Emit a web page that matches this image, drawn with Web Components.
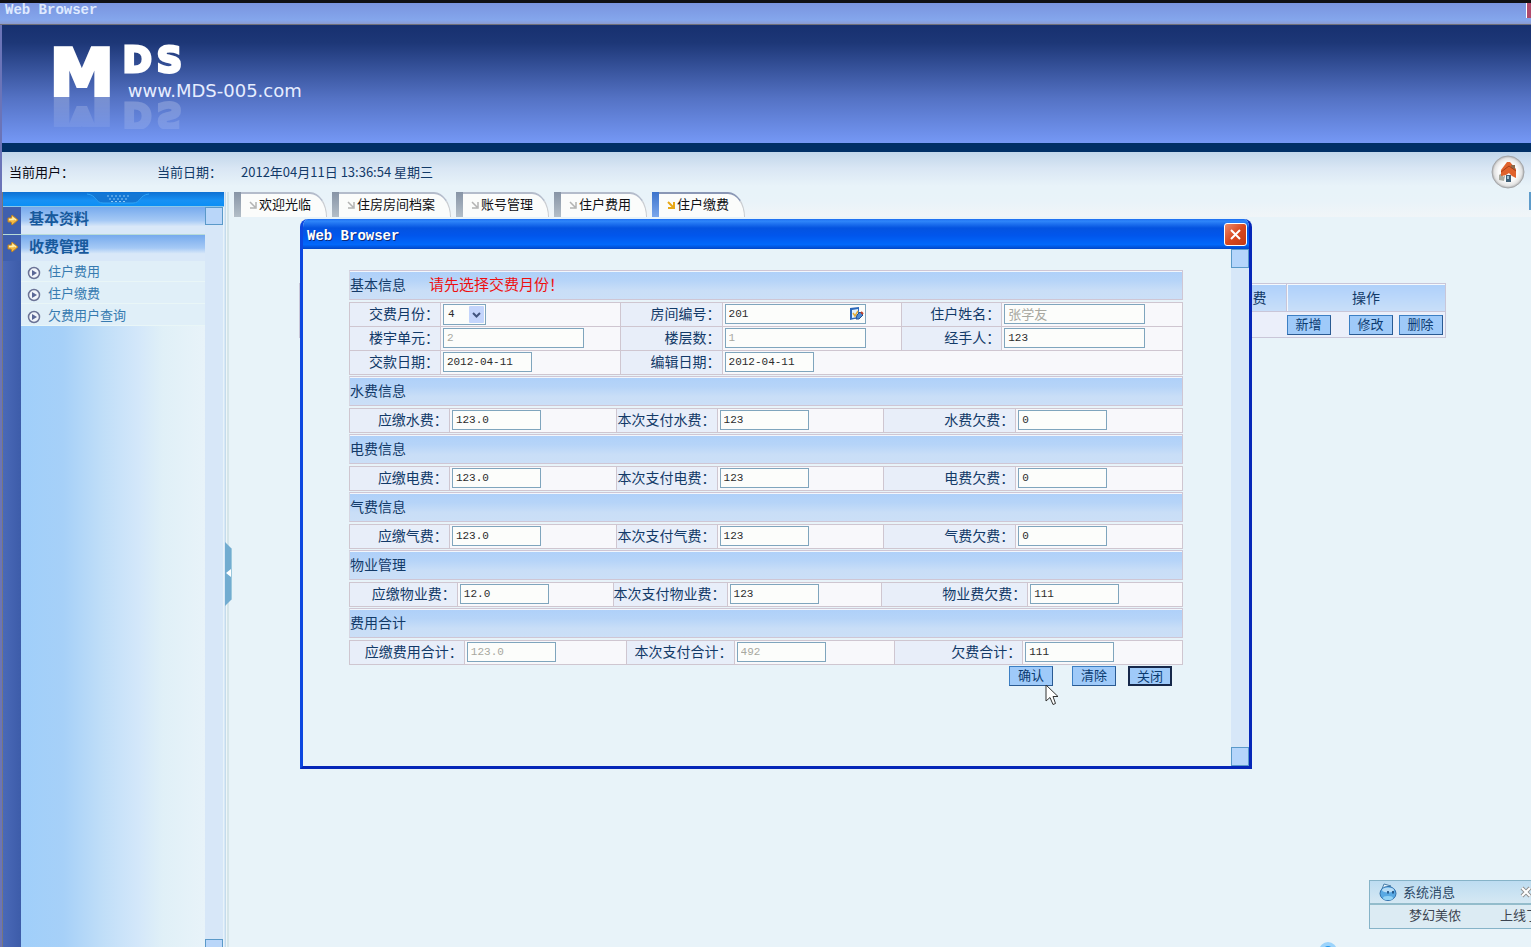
<!DOCTYPE html>
<html lang="zh-CN">
<head>
<meta charset="utf-8">
<title>MDS 物业管理</title>
<style>
  html, body { margin: 0; height: 100%; }
  body {
    font: 13px/20px "Noto Sans CJK SC", sans-serif;
    color: #123a68;
    background: #e8f3f9;
    overflow: hidden;
  }
</style>
</head>
<body>
<portal-shell window-title="Web Browser">
  <brand-banner slot="banner"></brand-banner>
  <info-bar slot="info" date="2012年04月11日 13:36:54 星期三"></info-bar>
  <side-menu slot="side"></side-menu>
  <tab-item slot="tabs">欢迎光临</tab-item>
  <tab-item slot="tabs">住房房间档案</tab-item>
  <tab-item slot="tabs">账号管理</tab-item>
  <tab-item slot="tabs">住户费用</tab-item>
  <tab-item slot="tabs" active>住户缴费</tab-item>
  <record-table></record-table>
</portal-shell>

<modal-window window-title="Web Browser">
  <fee-section heading="基本信息" note="请先选择交费月份！" columns="90fr 179fr 101fr 179fr 99fr 180fr">
    <fee-field label="交费月份" value="4" kind="select"></fee-field>
    <fee-field label="房间编号" value="201" kind="lookup" size="wide"></fee-field>
    <fee-field label="住户姓名" value="张学友" size="wide" off></fee-field>
    <fee-field label="楼宇单元" value="2" size="wide" off></fee-field>
    <fee-field label="楼层数" value="1" size="wide" off></fee-field>
    <fee-field label="经手人" value="123" size="wide"></fee-field>
    <fee-field label="交款日期" value="2012-04-11"></fee-field>
    <fee-field label="编辑日期" value="2012-04-11" fill></fee-field>
  </fee-section>
  <fee-section heading="水费信息" columns="99fr 166fr 100fr 166fr 131fr 166fr">
    <fee-field label="应缴水费" value="123.0"></fee-field>
    <fee-field label="本次支付水费" value="123"></fee-field>
    <fee-field label="水费欠费" value="0"></fee-field>
  </fee-section>
  <fee-section heading="电费信息" columns="99fr 166fr 100fr 166fr 131fr 166fr">
    <fee-field label="应缴电费" value="123.0"></fee-field>
    <fee-field label="本次支付电费" value="123"></fee-field>
    <fee-field label="电费欠费" value="0"></fee-field>
  </fee-section>
  <fee-section heading="气费信息" columns="99fr 166fr 100fr 166fr 131fr 166fr">
    <fee-field label="应缴气费" value="123.0"></fee-field>
    <fee-field label="本次支付气费" value="123"></fee-field>
    <fee-field label="气费欠费" value="0"></fee-field>
  </fee-section>
  <fee-section heading="物业管理" columns="107fr 155fr 113fr 154fr 145fr 154fr">
    <fee-field label="应缴物业费" value="12.0"></fee-field>
    <fee-field label="本次支付物业费" value="123"></fee-field>
    <fee-field label="物业费欠费" value="111"></fee-field>
  </fee-section>
  <fee-section heading="费用合计" columns="114fr 161fr 107fr 160fr 127fr 159fr">
    <fee-field label="应缴费用合计" value="123.0" off></fee-field>
    <fee-field label="本次支付合计" value="492" off></fee-field>
    <fee-field label="欠费合计" value="111"></fee-field>
  </fee-section>
  <push-button slot="actions">确认</push-button>
  <push-button slot="actions" class="gap">清除</push-button>
  <push-button slot="actions" class="default" strong>关闭</push-button>
</modal-window>
<message-toast></message-toast>
<mouse-pointer></mouse-pointer>

<script>
const define = (name, render) => customElements.define(name, class extends HTMLElement {
  connectedCallback() {
    if (this.shadowRoot) return;
    const t = document.createElement('template');
    t.innerHTML = render(this);
    this.attachShadow({ mode: 'open' }).append(t.content.cloneNode(true));
  }
});
const attr = (el, n) => el.getAttribute(n) || '';

define('portal-shell', el => `
<style>
  :host { display: flex; flex-direction: column; height: 100vh; box-sizing: border-box; border-top: 3px solid #101014; overflow: hidden; background: #e8f3f9; }
  .title { height: 21px; line-height: 14px; padding-left: 5px; font-family: "Liberation Mono", monospace; font-weight: bold; font-size: 14px; color: #dfeaff; background: linear-gradient(#7a94df, #84a6ec 80%, #8b9bd0); border-bottom: 1px solid #6e6e78; display: flex; justify-content: space-between; flex: none; }
  .title i { width: 4px; height: 15px; background: #b04a6c; border-left: 1px solid #fff; }
  .frame { flex: 1; min-height: 0; display: flex; flex-direction: column; border-left: 2px solid #6b74b8; }
  .body { flex: 1; min-height: 0; display: flex; border-left: 1px solid #77777c; }
  .split { width: 9px; flex: none; display: flex; align-items: center; box-sizing: border-box; padding-top: 9px; background: linear-gradient(90deg, #d7e7f8 1px, #c4dceb 1px 2px, #eef5f8 2px 3px, #d5e5e9 3px 5px, #e8f3f9 5px); }
  .split svg { margin-left: 1px; }
  main { flex: 1; min-width: 0; }
  nav { display: flex; gap: 5px; height: 25px; padding-left: 1px; background: linear-gradient(#e8f3f9, #e9f3f9 40%, #f1f5f8); }
  .edge { width: 2px; height: 18px; margin-left: auto; background: #5f9ccb; }
  .content { padding: 66px 85px 0 66px; }
</style>
<div class="title"><span>${attr(el, 'window-title')}</span><i></i></div>
<div class="frame">
  <slot name="banner"></slot>
  <slot name="info"></slot>
  <div class="body">
    <slot name="side"></slot>
    <div class="split"><svg width="8" height="64" viewBox="0 0 8 64"><path d="M0 0L7 7V57L0 64Z" fill="#72acd0"/><path d="M6.500 7V57" stroke="#9bc8dd"/><path d="M1 31L6 27V35Z" fill="#fff"/></svg></div>
    <main>
      <nav><slot name="tabs"></slot><span class="edge"></span></nav>
      <div class="content"><slot></slot></div>
    </main>
  </div>
</div>`);

define('brand-banner', () => `
<style>
  :host { display: flex; align-items: flex-start; gap: 9px; height: 118px; flex: none; padding: 0 0 0 48px; border-bottom: 9px solid #002f66; background: linear-gradient(#17306f, #1d3777 15%, #5472c4 62%, #7598f5); color: #fff; overflow: hidden; }
  .m, .ds { font-family: "DejaVu Sans", sans-serif; font-weight: bold; }
  .m { margin-top: 23px; height: 49px; font-size: 64px; line-height: 51px; -webkit-text-stroke: 4px #fff; -webkit-box-reflect: below 0 linear-gradient(transparent 38%, rgba(255,255,255,.08) 39%, rgba(255,255,255,.22)); }
  .ds { margin-top: 21px; height: 28px; font-size: 35px; line-height: 28px; -webkit-text-stroke: 3px #fff; display: flex; gap: 5px; width: max-content; -webkit-box-reflect: below 27px linear-gradient(rgba(255,255,255,.12), rgba(255,255,255,.22)); }
  .url { font: 18px/18px "DejaVu Sans", sans-serif; margin: 8px 0 0 5px; color: #e6edff; }
</style>
<div class="m">M</div>
<div><div class="ds"><span>D</span><span>S</span></div><div class="url">www.MDS-005.com</div></div>`);

define('info-bar', el => `
<style>
  :host { display: flex; align-items: center; height: 40px; flex: none; padding: 0 6px 0 7px; background: linear-gradient(#c1d6ea, #d9e6f4 40%, #e8f3f9 85%); }
  .user { width: 148px; color: #0a0a14; }
  .date { width: 84px; }
  a { margin-left: auto; height: 36px; }
</style>
<span class="user">当前用户：</span><span class="date">当前日期：</span><time>${attr(el, 'date')}</time>
<a href="#" aria-label="首页"><svg width="34" height="36" viewBox="0 0 34 36">
  <defs><radialGradient id="g"><stop offset=".6" stop-color="#fafafa"/><stop offset=".85" stop-color="#e4e4e4"/><stop offset="1" stop-color="#b0b0b0"/></radialGradient></defs>
  <circle cx="17" cy="18" r="16" fill="url(#g)" stroke="#a5a7aa"/>
  <path d="M8 21V26L13 27L14 22V17Z" fill="#a9aaa0"/><path d="M12 19L17 14L24 18V23L17 19L12 23Z" fill="#f3e9df"/>
  <path d="M10 16L16 8H19L25 15V24L21 22L18 19L15 21L10 22Z" fill="#e0622c"/><path d="M20 11H24V16L20 14Z" fill="#8d6a4c"/><path d="M10 18L18 12L25 17" stroke="#a83d17" fill="none"/>
  <rect x="15" y="21" width="5" height="7" fill="#3e5f77"/><rect x="16" y="22" width="2" height="3" fill="#a4c3d4"/>
</svg></a>`);

define('side-menu', () => {
  const arrow = `<svg width="12" height="12" viewBox="0 0 12 12"><path d="M1 4H4L5 1L11 6L5 11L4 8H1Z" fill="#f3b840" stroke="#b9812a"/><path d="M2 5.500H6V4L9 6" fill="none" stroke="#fff2b0" stroke-width="1.500"/></svg>`;
  const play = `<svg width="14" height="14" viewBox="0 0 14 14"><circle cx="7" cy="7" r="5.500" fill="#f2f5fb" stroke="#6b7396" stroke-width="1.500"/><path d="M5 4L10 7L5 10Z" fill="#5a6796"/></svg>`;
  return `
<style>
  :host { display: flex; flex-direction: column; width: 221px; flex: none; }
  .grip { height: 14px; flex: none; background: linear-gradient(#0d70d2, #1791f4 60%, #0c8ff5); border-bottom: 1px solid #8cc7e8; }
  .grip svg { display: block; margin-left: 84px; }
  .row { flex: 1; min-height: 0; display: flex; }
  .panel { flex: 1; background: linear-gradient(90deg, #4a69b8, #3d5ca9 18px, #a0cffa 18px, #a6d0f8 60px, #c0def8 100px, #d3e7fa 135px, #e0f0f7 160px, #e8f3f9); }
  h2 { margin: 0; height: 27px; display: flex; align-items: center; gap: 10px; padding-left: 4px; font-size: 15px; line-height: 22px; color: #17599c; background: linear-gradient(90deg, #3f5fad 18px, transparent 18px), linear-gradient(#76aaed, #a5c9f5 50%, #d9e8f8 72%); }
  h2 span { margin-bottom: 5px; }
  h2 svg { width: 12px; flex: none; margin-bottom: 2px; }
  .second { height: 26px; border-top: 1px solid #b8dcd8; }
  ul { list-style: none; margin: 0 0 0 18px; padding: 0; background: #e0eff8; }
  li { height: 21px; box-sizing: border-box; border-bottom: 1px solid #e9f6f7; display: flex; align-items: center; gap: 7px; padding-left: 6px; margin-bottom: 1px; }
  li svg { flex: none; margin-top: 3px; }
  li a { margin-bottom: 1px; }
  a { color: #377bb0; text-decoration: none; }
  .bar { width: 18px; flex: none; margin-right: 1px; background: #d7e7f8; display: flex; flex-direction: column; justify-content: space-between; }
  .bar i { height: 16px; border: 1px solid #5a99c9; background: #b9d6f9; }
  .bar i:last-child { height: 7px; border-bottom: 0; }
</style>
<div class="grip"><svg width="64" height="14" viewBox="0 0 64 14"><path d="M0 2C10 3 8 11 16 11H46C54 11 52 3 62 2" fill="#1477d4" stroke="#2fa3f5"/><path d="M20 4H44M22 7H42M24 9.500H40" stroke="#8fcaf7" stroke-dasharray="2 2"/></svg></div>
<div class="row">
  <nav class="panel">
    <h2>${arrow}<span>基本资料</span></h2>
    <h2 class="second">${arrow}<span>收费管理</span></h2>
    <ul>
      <li>${play}<a href="#">住户费用</a></li>
      <li>${play}<a href="#">住户缴费</a></li>
      <li>${play}<a href="#">欠费用户查询</a></li>
    </ul>
  </nav>
  <div class="bar"><i></i><i></i></div>
</div>`;
});

define('tab-item', el => {
  const on = el.hasAttribute('active');
  return `
<style>
  :host { display: flex; flex: none; height: 25px; }
  .lead { width: 7px; background: linear-gradient(${on ? '#3c74cc, #7aa6ec' : '#8794a6, #b3bec8'}); }
  a { display: flex; align-items: flex-start; gap: 2px; padding: 0 15px 0 8px; height: 23px; line-height: 20px; color: #101014; text-decoration: none; background: #fbfcfb; border-top: 2px solid ${on ? '#8a97b5' : '#b4bccb'}; border-right: 1px solid #c9ccd0; border-top-right-radius: 17px 25px; }
  svg { margin-top: 7px; flex: none; }
</style>
<i class="lead"></i><a href="#"><svg width="8" height="8" viewBox="0 0 8 8"><path d="M1 1L6 6M7 1V7H1" fill="none" stroke="${on ? '#e8a818' : '#b3b3b3'}" stroke-width="${on ? 2 : 1.5}"/></svg><slot></slot></a>`;
});

define('push-button', el => `
<style>
  :host { display: inline-block; }
  :host(.gap) { margin-left: 19px; }
  :host(.default) { margin-left: 12px; }
  button { display: block; box-sizing: border-box; width: 44px; height: 20px; padding: 0 0 2px; font: 13px/16px "Noto Sans CJK SC", sans-serif; color: #0b3a70; background: #9fcaf9; border: ${el.hasAttribute('strong') ? '2px solid #16284a' : '1px solid #3c7fc4'}; ${el.hasAttribute('strong') ? '' : 'border-right-color:#2a5a92;border-bottom-color:#2a5a92;'} }
</style><button type="button"><slot></slot></button>`);

define('record-table', () => `
<style>
  :host { display: block; }
  table { width: 100%; border-collapse: collapse; table-layout: fixed; border: 1px solid #c9c6d8; }
  th { height: 25px; padding: 0 0 2px; font-weight: normal; font-size: 14px; text-align: center; border: 1px solid #c9c6d8; background: linear-gradient(#aed0fa, #c9dff9); box-shadow: inset 1px 1px #f4f8fd; }
  td { height: 25px; padding: 0; background: #ebeffa; }
  .fee { width: 53px; } .ops { width: 158px; }
  .acts { display: flex; }
  .acts push-button:nth-child(2) { margin-left: 18px; }
  .acts push-button:nth-child(3) { margin-left: 6px; }
</style>
<table>
  <thead><tr><th></th><th class="fee">费</th><th class="ops">操作</th></tr></thead>
  <tbody><tr><td></td><td></td><td><div class="acts"><push-button>新增</push-button><push-button>修改</push-button><push-button>删除</push-button></div></td></tr></tbody>
</table>`);

define('modal-window', el => `
<style>
  :host { position: absolute; left: 300px; right: 279px; top: 219px; height: 550px; box-sizing: border-box; display: flex; flex-direction: column; border: solid #0c47e0; border-width: 0 3px 3px 3px; border-right-color: #0526b8; border-bottom-color: #0526b8; border-radius: 8px 8px 0 0; background: #e8f3f9; overflow: hidden; }
  header { height: 30px; flex: none; display: flex; align-items: center; justify-content: space-between; padding: 0 2px 0 4px; background: linear-gradient(#1b6cf0, #2f86fa 7%, #0453e0 30%, #0156ec 55%, #0168fb 85%, #0247c8); font: bold 14px/20px "Liberation Mono", monospace; color: #fff; text-shadow: 1px 1px #0a2a7c; }
  header span { padding-top: 3px; }
  header button { width: 23px; height: 23px; margin-top: 1px; padding: 0; border: 1px solid #fff; border-radius: 3px; background: linear-gradient(135deg, #ec8a6c, #d9481f 50%, #c33a14); display: grid; place-items: center; }
  .body { flex: 1; min-height: 0; display: flex; }
  form { flex: 1; min-width: 0; padding: 21px 48px 0 46px; }
  .actions { display: flex; justify-content: flex-end; padding-right: 11px; }
  .bar { width: 18px; flex: none; background: #d7e7f8; display: flex; flex-direction: column; justify-content: space-between; }
  .bar i { height: 17px; border: 1px solid #5a99c9; background: #b5d5fb; }
</style>
<header><span>${attr(el, 'window-title')}</span><button type="button" aria-label="关闭窗口"><svg width="15" height="15" viewBox="0 0 15 15"><path d="M3 3L12 12M12 3L3 12" stroke="#fff" stroke-width="2"/></svg></button></header>
<div class="body"><form><slot></slot><div class="actions"><slot name="actions"></slot></div></form><div class="bar"><i></i><i></i></div></div>`);

define('fee-section', el => `
<style>
  :host { display: block; margin-bottom: 1px; }
  h3 { margin: 0 0 2px; height: 30px; box-sizing: border-box; display: flex; align-items: center; gap: 23px; font-size: 14px; font-weight: normal; border: 1px solid #cfc6d4; border-left-color: #d6d6e2; background: linear-gradient(#aed0f9, #b6d4f8 35%, #c9def7 70%, #cbdff7); box-shadow: inset 0 1px #f2f6fc; padding-bottom: 3px; }
  em { font-style: normal; font-size: 15px; color: #ee1010; }
  .grid { display: grid; grid-template-columns: ${attr(el, 'columns')}; grid-auto-rows: 23px; gap: 1px; border: 1px solid #cfc6d0; background: #cfc6d0; }
</style>
<h3><span>${attr(el, 'heading')}</span>${attr(el, 'note') ? `<em>${attr(el, 'note')}</em>` : ''}</h3>
<div class="grid"><slot></slot></div>`);

define('fee-field', el => {
  const kind = attr(el, 'kind');
  const control = kind === 'select'
    ? `<span class="pick"><select id="c"><option>${attr(el, 'value')}</option></select><svg width="15" height="17" viewBox="0 0 15 17"><rect width="15" height="17" rx="1" fill="#c4d5fc"/><path d="M4 7L7.500 10.500L11 7" fill="none" stroke="#42557f" stroke-width="2"/></svg></span>`
    : `<span class="pick"><input id="c" type="text" value="${attr(el, 'value')}" ${el.hasAttribute('off') ? 'disabled' : ''}>${kind === 'lookup' ? `<svg class="edit" width="16" height="16" viewBox="0 0 16 16"><path d="M2 2L11 1V12L2 14Z" fill="#2d68ba"/><path d="M4 4L10 3V11L4 12Z" fill="#e4f2fb"/><path d="M5 7L7 10L10 5" fill="none" stroke="#e2ad3c" stroke-width="1.500"/><path d="M8 13L9 9L12 6L15 9L11 13Z" fill="#4d8bd2" stroke="#234f91"/><path d="M13 6L15 8" stroke="#c23f28" stroke-width="2"/></svg>` : ''}</span>`;
  return `
<style>
  :host { display: contents; }
  label { min-width: 0; display: flex; align-items: center; justify-content: flex-end; font-size: 14px; line-height: 18px; padding: 0 1px 3px 0; white-space: nowrap; background: #e8eef9; }
  .cell { min-width: 0; display: flex; align-items: center; padding: 0 0 1px 2px; background: #f8f8fb; ${el.hasAttribute('fill') ? 'grid-column: span 3;' : ''} }
  .pick { position: relative; display: flex; }
  .pick svg { position: absolute; right: 2px; top: 2px; pointer-events: none; }
  input, select { box-sizing: border-box; height: 20px; margin: 0; padding: 0 3px; border: 1px solid #7fa5bd; border-radius: 0; background: #fcfdfb; color: #2b2b2b; font: 11px/16px "Liberation Mono", "Noto Sans CJK SC", monospace; }
  input { width: ${attr(el, 'size') === 'wide' ? 141 : 89}px; padding-bottom: 1px; }
  input:disabled { color: #a8a8a0; font-size: ${/[^\x00-\x7f]/.test(attr(el, 'value')) ? 13 : 11}px; }
  select { appearance: none; width: 43px; height: 21px; padding-left: 4px; }
</style>
<label for="c">${attr(el, 'label')}：</label><div class="cell">${control}</div>`;
});

define('message-toast', () => `
<style>
  :host { position: absolute; right: 0; bottom: 0; width: 212px; height: 67px; overflow: hidden; }
  section { margin-left: 50px; width: 176px; box-sizing: border-box; border: 1px solid #86b3c8; background: #dcebf3; color: #3c4450; }
  header { display: flex; align-items: center; height: 22px; padding-left: 9px; gap: 6px; border-bottom: 2px solid #93bccb; background: linear-gradient(#bddcf1, #d5e8f3); color: #2c4866; }
  button { margin-left: 59px; padding: 0; border: 0; background: none; height: 12px; display: flex; }
  p { margin: 0; height: 23px; line-height: 20px; padding-left: 39px; display: flex; gap: 39px; white-space: nowrap; }
  .orb { display: block; margin-top: 13px; }
</style>
<section>
  <header><svg width="18" height="18" viewBox="0 0 18 18"><path d="M3 6L5 1L12 3Z" fill="#e9f5fc" stroke="#4b7ea8"/><ellipse cx="9" cy="10.500" rx="8" ry="7" fill="#58a9e3" stroke="#3271ab"/><ellipse cx="9" cy="7" rx="6" ry="2.500" fill="#b6dcf6"/><path d="M9 8V10.500M14 8V10.500" stroke="#123f70" stroke-width="1.500"/><ellipse cx="9" cy="15" rx="5" ry="2" fill="#93d3f5"/></svg><span>系统消息</span>
  <button type="button" aria-label="关闭消息"><svg width="12" height="12" viewBox="0 0 12 12"><path d="M2 2L10 10M10 2L2 10" stroke="#8f8f8f" stroke-width="4"/><path d="M2 2L10 10M10 2L2 10" stroke="#fff" stroke-width="2"/></svg></button></header>
  <p><span>梦幻美侬</span><span>上线了</span></p>
</section>
<svg class="orb" width="18" height="18" viewBox="0 0 18 18"><circle cx="9" cy="9" r="9" fill="#9bd3fb"/><circle cx="9" cy="9" r="5" fill="#1f96ef"/></svg>`);

define('mouse-pointer', () => `
<style>:host { position: absolute; left: 1045px; top: 684px; pointer-events: none; } svg { display: block; }</style>
<svg width="14" height="22" viewBox="0 0 14 22"><path d="M1 1V17L5 13.500L8 20.500L10.500 19.500L8 12.500H13Z" fill="#fff" stroke="#333"/></svg>`);
</script>
</body>
</html>
